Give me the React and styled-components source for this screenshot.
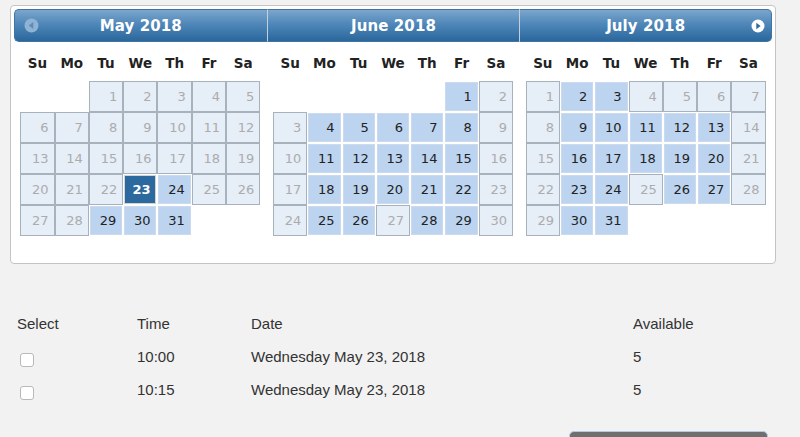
import React from 'react';
import styled, { createGlobalStyle } from 'styled-components';

const GlobalStyle = createGlobalStyle`
  html, body {
    margin: 0;
    padding: 0;
    background: #f2f2f2;
    overflow: hidden;
  }
  body {
    font-family: "Liberation Sans", Arial, sans-serif;
    color: #333;
  }
`;

const DAYS = ['Su', 'Mo', 'Tu', 'We', 'Th', 'Fr', 'Sa'];

const MONTHS = [
  { name: 'May 2018', offset: 2, length: 31, open: [23, 24, 29, 30, 31], picked: 23, nav: 'prev' },
  {
    name: 'June 2018',
    offset: 5,
    length: 30,
    open: [1, 4, 5, 6, 7, 8, 11, 12, 13, 14, 15, 18, 19, 20, 21, 22, 25, 26, 28, 29],
  },
  {
    name: 'July 2018',
    offset: 0,
    length: 31,
    open: [2, 3, 9, 10, 11, 12, 13, 16, 17, 18, 19, 20, 23, 24, 26, 27, 30, 31],
    nav: 'next',
  },
];

const SLOTS = [
  { time: '10:00', date: 'Wednesday May 23, 2018', available: 5 },
  { time: '10:15', date: 'Wednesday May 23, 2018', available: 5 },
];

const Page = styled.div`
  padding: 5px 10px 0;
`;

const Calendar = styled.div`
  width: 766px;
  box-sizing: border-box;
  background: #fff;
  border: 1px solid #c4c4c4;
  border-radius: 4px;
  padding: 3px 3px 27px;
  display: grid;
  grid-template-columns: repeat(3, 1fr);
  font-family: "DejaVu Sans", Verdana, sans-serif;
`;

const Group = styled.div`
  display: flex;
  flex-direction: column;
`;

const Header = styled.div`
  height: 33px;
  box-sizing: border-box;
  display: grid;
  grid-template-columns: 32px 1fr 32px;
  align-items: center;
  background: linear-gradient(#7ba6cc 0%, #4f87b9 45%, #2b679c 100%);
  border: 1px solid #3f75a6;
  border-left: ${(p) => (p.$first ? '1px solid #3f75a6' : '1px solid #c3cfdb')};
  border-right: ${(p) => (p.$last ? '1px solid #3f75a6' : '0')};
  border-radius: ${(p) => (p.$first ? '5px 0 0 5px' : p.$last ? '0 5px 5px 0' : '0')};
  color: #fff;
`;

const Title = styled.div`
  grid-column: 2;
  grid-row: 1;
  text-align: center;
  font-weight: bold;
  font-size: 15px;
  letter-spacing: 0.1px;
`;

const NavSlot = styled.div`
  display: flex;
  align-items: center;
  justify-content: ${(p) => (p.$side === 'next' ? 'flex-end' : 'center')};
  padding-right: ${(p) => (p.$side === 'next' ? '6px' : '0')};
  grid-column: ${(p) => (p.$side === 'next' ? 3 : 1)};
  grid-row: 1;
`;

const DayGrid = styled.div`
  width: 240px;
  margin: 2px auto 0;
  display: grid;
  grid-template-columns: repeat(7, 1fr);
  grid-template-rows: 37px;
  grid-auto-rows: 31px;
`;

const DayName = styled.div`
  display: flex;
  align-items: center;
  justify-content: center;
  font-weight: bold;
  font-size: 13.5px;
  color: #222;
`;

const Day = styled.div`
  box-sizing: border-box;
  display: flex;
  align-items: center;
  justify-content: flex-end;
  padding-right: 5px;
  font-size: 13px;
  margin: ${(p) => (p.$state === 'off' ? '0' : '1px')};
  border: 1px solid
    ${(p) => (p.$state === 'off' ? '#a8b2bc' : p.$state === 'picked' ? '#d4d4d4' : '#cbdaed')};
  background: ${(p) => (p.$state === 'off' ? '#e6eef8' : p.$state === 'picked' ? '#2c699e' : '#bcd4f0')};
  color: ${(p) => (p.$state === 'off' ? '#acacac' : p.$state === 'picked' ? '#fff' : '#222')};
  font-weight: ${(p) => (p.$state === 'picked' ? 'bold' : 'normal')};
`;

const Slots = styled.div`
  margin: 43px 0 0 7px;
  display: grid;
  grid-template-columns: 120px 114px 382px 1fr;
  grid-auto-rows: 33px;
  align-items: center;
  font-size: 15px;
  color: #333;
`;

const Check = styled.span`
  width: 14px;
  height: 14px;
  box-sizing: border-box;
  margin: 7px 0 0 3px;
  border: 1px solid #b9b9b9;
  border-radius: 3px;
  background: #fff;
`;

const Actions = styled.div`
  display: flex;
  justify-content: flex-end;
  padding: 25px 22px 0 0;
`;

const Button = styled.button`
  width: 199px;
  height: 40px;
  border: 1px solid #b4cbe2;
  border-radius: 5px;
  background: #6f6f6f;
`;

function NavIcon({ side }) {
  const next = side === 'next';
  const size = next ? 14 : 15;
  return (
    <svg width={size} height={size} viewBox="0 0 14 14">
      <circle cx="7" cy="7" r="6.5" fill={next ? '#fff' : '#8fb3d4'} />
      {next ? (
        <path d="M5.3 3.8 L9.6 7 L5.3 10.2 Z" fill="#2c699e" />
      ) : (
        <path d="M8.7 3.8 L4.4 7 L8.7 10.2 Z" fill="#5b8dbc" />
      )}
    </svg>
  );
}

function Month({ month, first, last }) {
  const blanks = Array.from({ length: month.offset }, (_, i) => <div key={`b${i}`} />);
  const days = Array.from({ length: month.length }, (_, i) => {
    const d = i + 1;
    const state = d === month.picked ? 'picked' : month.open.includes(d) ? 'open' : 'off';
    return (
      <Day key={d} $state={state}>
        {d}
      </Day>
    );
  });

  return (
    <Group>
      <Header $first={first} $last={last}>
        {month.nav && (
          <NavSlot $side={month.nav}>
            <NavIcon side={month.nav} />
          </NavSlot>
        )}
        <Title>{month.name}</Title>
      </Header>
      <DayGrid>
        {DAYS.map((d) => (
          <DayName key={d}>{d}</DayName>
        ))}
        {blanks}
        {days}
      </DayGrid>
    </Group>
  );
}

export default function App() {
  return (
    <Page>
      <GlobalStyle />
      <Calendar>
        {MONTHS.map((m, i) => (
          <Month key={m.name} month={m} first={i === 0} last={i === MONTHS.length - 1} />
        ))}
      </Calendar>

      <Slots>
        <div>Select</div>
        <div>Time</div>
        <div>Date</div>
        <div>Available</div>
        {SLOTS.map((s) => (
          <React.Fragment key={s.time}>
            <Check />
            <div>{s.time}</div>
            <div>{s.date}</div>
            <div>{s.available}</div>
          </React.Fragment>
        ))}
      </Slots>

      <Actions>
        <Button aria-label="Book appointment" />
      </Actions>
    </Page>
  );
}
